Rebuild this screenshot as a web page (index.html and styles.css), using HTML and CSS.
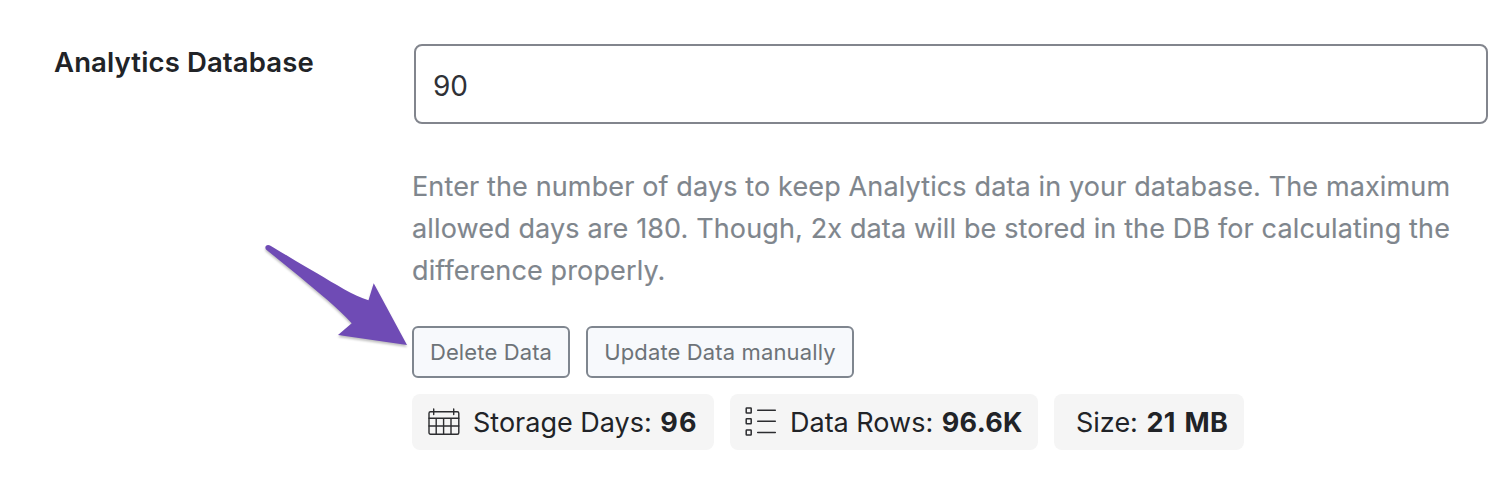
FILE: index.html
```html
<!DOCTYPE html>
<html lang="en">
<head>
<meta charset="UTF-8" />
<title>Analytics Database</title>
<link rel="stylesheet" href="styles.css">
</head>
<body>
<div class="field-row">
<label class="field-label" for="days">Analytics Database</label>
<div class="field-body">
<input class="days-input" type="text" id="days" value="90" />
<p class="description">
Enter the number of days to keep Analytics data in your database. The maximum<br>
allowed days are 180. Though, 2x data will be stored in the DB for calculating the<br>
difference properly.
</p>
<div class="buttons">
<button class="button delete">Delete Data</button>
<button class="button update">Update Data manually</button>
</div>
<div class="stats">
<div class="stat days">
<svg class="icon" width="32" height="28" viewBox="0 0 32 28" fill="none" stroke="#2c2d30" stroke-width="1.4" stroke-linecap="round">
<rect x="1" y="3.700" width="29.800" height="22.600" rx="1.500" />
<path d="M1 10.300h29.800M1 18h29.800M8.200 10.300v16M15.600 10.300v16M23 10.300v16M5.700 1v5.500M25.700 1v5.500" />
</svg>
<span class="stat-text">Storage Days: <b>96</b></span>
</div>
<div class="stat rows">
<svg class="icon" width="32" height="30" viewBox="0 0 32 30" fill="none" stroke="#2c2d30" stroke-width="1.500" stroke-linecap="round">
<rect x="1.200" y="1" width="5" height="5" rx=".5" />
<rect x="1.200" y="11.700" width="5" height="5" rx=".5" />
<rect x="1.200" y="23" width="5" height="5" rx=".5" />
<path d="M12.700 3.200h17.600M12.700 14.200h17.600M12.700 25.500h17.600" />
</svg>
<span class="stat-text">Data Rows: <b>96.6K</b></span>
</div>
<div class="stat size">
<span class="stat-text">Size: <b>21 MB</b></span>
</div>
</div>
</div>
</div>
<svg class="arrow" width="152" height="112" viewBox="0 0 152 112">
<path fill="#6f4bb5" d="M10.500 5.700C26 15 41 24 57 33.300C75 44 94 56 108.500 60.300L113.700 43.300L147 105L78 95L91.700 83.300C77 67 59 53 40 37L6 9.500C4 6.500 7 3.500 10.500 5.700Z" />
</svg>
</body>
</html>
```
FILE: styles.css
```css
body {
margin: 0;
background: #fff;
color: #212327;
font-family: Inter, "Liberation Sans", sans-serif;
}

.field-row {
display: flex;
padding: 44px 16px 0 54px;
}

.field-label {
width: 358px;
flex-shrink: 0;
font-size: 27.5px;
line-height: 36px;
font-weight: 600;
letter-spacing: 0.13px;
}

.field-body {
flex: 1;
}

.days-input {
display: block;
box-sizing: border-box;
width: 1074px;
height: 80px;
margin-left: 2px;
padding: 4px 17px 0;
border: 2px solid #82858d;
border-radius: 8px;
color: #2f3136;
font: 28px Inter, sans-serif;
}

.description {
margin: 42px 0 0;
color: #7f868d;
font-size: 27px;
line-height: 42px;
letter-spacing: 0.13px;
white-space: nowrap;
-webkit-text-stroke: 0.15px #7f868d;
}

.buttons {
display: flex;
gap: 16px;
margin-top: 34px;
}

.button {
box-sizing: border-box;
width: 158px;
height: 52px;
padding: 0;
border: 2px solid #7f868f;
border-radius: 6px;
background: #f7f9fc;
color: #6d7378;
font: 22px Inter, sans-serif;
letter-spacing: 0.13px;
}

.update {
width: 268px;
}

.stats {
display: flex;
gap: 16px;
margin-top: 16px;
}

.stat {
display: flex;
align-items: center;
box-sizing: border-box;
width: 302px;
height: 56px;
padding-left: 16px;
border-radius: 8px;
background: #f5f5f5;
font-size: 27px;
white-space: nowrap;
}

.stat b {
margin-left: 1px;
letter-spacing: 0.3px;
}

.icon {
margin-right: 13px;
}

.days b {
letter-spacing: 1px;
}

.rows {
width: 308px;
padding-left: 15px;
}

.size {
width: 190px;
padding-left: 22px;
}

.size b {
word-spacing: 2px;
}

/* pointer to the delete button */
.arrow {
position: absolute;
left: 260px;
top: 240px;
filter: drop-shadow(0 2px 1px rgba(0, 0, 0, 0.25));
}
```
